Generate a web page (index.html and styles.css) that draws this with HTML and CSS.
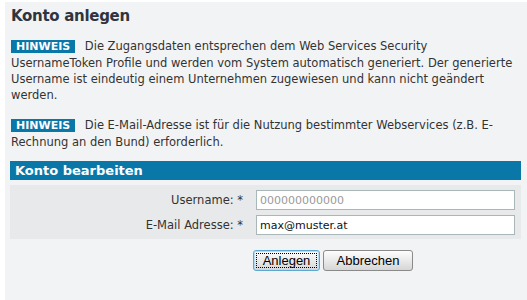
FILE: index.html
```html
<!DOCTYPE html>
<html lang="de">
<head>
    <meta charset="UTF-8">
    <title>Konto anlegen</title>
    <link rel="stylesheet" href="styles.css">
</head>
<body>
    <div class="page">
        <h1 class="title">Konto anlegen</h1>

        <p class="note"><span class="note__badge">HINWEIS</span> Die Zugangsdaten entsprechen dem Web Services Security UsernameToken Profile und werden vom System automatisch generiert. Der generierte Username ist eindeutig einem Unternehmen zugewiesen und kann nicht geändert werden.</p>

        <p class="note"><span class="note__badge">HINWEIS</span> Die E-Mail-Adresse ist für die Nutzung bestimmter Webservices (z.B. E-Rechnung an den Bund) erforderlich.</p>

        <div class="section">
            <h2 class="section__head">Konto bearbeiten</h2>
            <form class="form">
                <label class="form__label" for="username">Username: *</label>
                <input class="form__input" id="username" type="text" placeholder="000000000000">
                <label class="form__label" for="email">E-Mail Adresse: *</label>
                <input class="form__input" id="email" type="email" value="max@muster.at">
            </form>
            <div class="actions">
                <button class="btn btn--focus" type="button">Anlegen</button>
                <button class="btn btn--wide" type="button">Abbrechen</button>
            </div>
        </div>
    </div>
</body>
</html>
```

FILE: styles.css
```css
* {
    box-sizing: border-box;
}
html, body {
    margin: 0;
    padding: 0;
    background: #fff;
    font-family: "DejaVu Sans", Verdana, sans-serif;
    font-size: 11px;
    color: #333;
}
.page {
    margin: 2px 0 0 5px;
    min-height: 298px;
    padding: 4px 6px 20px 5px;
    background: #f2f3f5;
}
.title {
    margin: 0 0 0 1px;
    font-size: 15px;
    line-height: 20px;
    font-weight: 700;
    letter-spacing: -0.3px;
    color: #2e3540;
}
.note {
    max-width: 505px;
    margin: 12px 0 0 1px;
    font-size: 11.5px;
    line-height: 16px;
}
.note + .note {
    margin-top: 14px;
}
.note__badge {
    padding: 0 5px;
    margin-right: 6px;
    background: #0a77a9;
    color: #fff;
    font-size: 11px;
    font-weight: 700;
}
.section {
    margin-top: 11px;
}
.section__head {
    margin: 0;
    padding-left: 5px;
    height: 19px;
    font-size: 13px;
    line-height: 19px;
    font-weight: 700;
    color: #fff;
    background: #0a77a9;
}
.form {
    display: grid;
    grid-template-columns: 233px 1fr;
    column-gap: 13px;
    row-gap: 5px;
    align-items: center;
    margin-top: 5px;
    padding: 5px 6px 4px 0;
    background: #e8e9ea;
}
.form__label {
    text-align: right;
    font-size: 11.5px;
    color: #333;
}
.form__input {
    height: 20px;
    padding: 0 3px;
    border: 1px solid #a9b6ba;
    background: #fff;
    font-family: "DejaVu Sans", Verdana, sans-serif;
    font-size: 11px;
    color: #111;
}
.form__input::placeholder {
    color: #999;
}
.actions {
    display: flex;
    gap: 3px;
    margin-top: 11px;
    padding-left: 243px;
}
.btn {
    width: 67px;
    height: 21px;
    padding: 0;
    border: 1px solid #8a8a8a;
    border-radius: 3px;
    background: linear-gradient(#fdfdfd, #e6e6e6 60%, #d6d6d6);
    font-family: "Liberation Sans", Arial, sans-serif;
    font-size: 13px;
    color: #000;
}
.btn--wide {
    width: 90px;
}
.btn--focus {
    border-color: #5ea7d3;
    box-shadow: inset 0 0 0 1px #b7dcf2;
    outline: 1px dotted #000;
    outline-offset: -4px;
}
```
